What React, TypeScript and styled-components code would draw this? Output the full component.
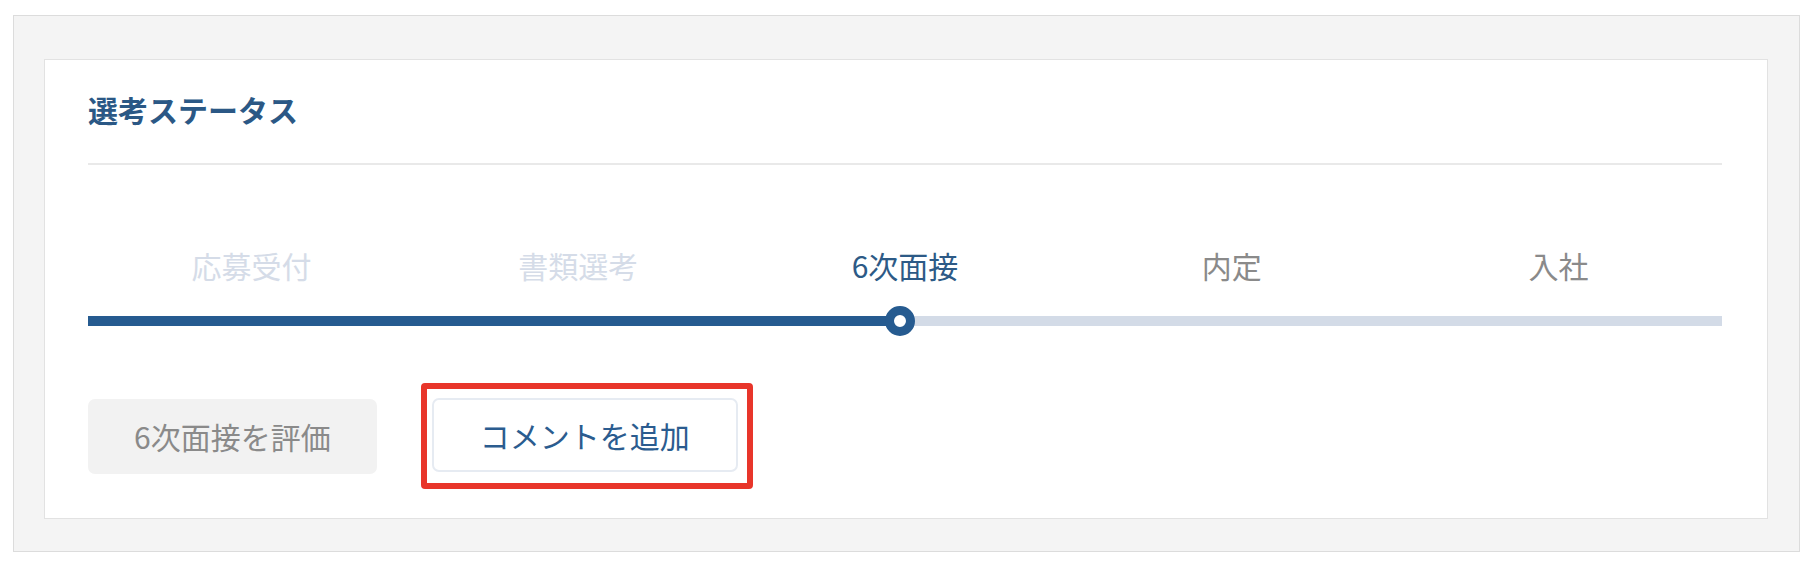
import React from 'react';
import styled, { createGlobalStyle } from 'styled-components';

const GlobalStyle = createGlobalStyle`
  html, body {
    margin: 0;
    padding: 0;
    background: #ffffff;
  }
  body {
    font-family: "Noto Sans CJK JP", "Noto Sans", sans-serif;
  }
`;

const steps = ['応募受付', '書類選考', '6次面接', '内定', '入社'];
const currentStep = 2;

type StepState = 'done' | 'current' | 'todo';

export default function App() {
  // 現在ステップの中心まで進捗バーを伸ばす
  const progress = 49.7;

  return (
    <>
      <GlobalStyle />
      <Page>
        <Frame>
          <Card>
            <Header>選考ステータス</Header>
            <StepLabels>
              {steps.map((step, i) => {
                const state: StepState = i < currentStep ? 'done' : i === currentStep ? 'current' : 'todo';
                return (
                  <StepLabel key={step} $state={state}>
                    {step}
                  </StepLabel>
                );
              })}
            </StepLabels>
            <TrackArea>
              <Track>
                <TrackFill style={{ width: `${progress}%` }} />
              </Track>
              <Knob style={{ left: `${progress}%` }} />
            </TrackArea>
            <Actions>
              <EvalButton>6次面接を評価</EvalButton>
              <Highlight>
                <CommentButton>コメントを追加</CommentButton>
              </Highlight>
            </Actions>
          </Card>
        </Frame>
      </Page>
    </>
  );
}

const Page = styled.div`
  padding: 15px 14px 16px 13px;
`;

const Frame = styled.div`
  background: #f4f4f4;
  border: 1px solid #dcdcdc;
  padding: 43px 31px 32px 30px;
`;

const Card = styled.div`
  background: #ffffff;
  border: 1px solid #e2e2e2;
  padding: 0 45px 29px 43px;
`;

const Header = styled.h2`
  margin: 0;
  padding: 29px 0 34px;
  font-size: 30px;
  line-height: 40px;
  font-weight: 700;
  color: #2b5885;
  border-bottom: 2px solid #e9e9e9;
`;

const StepLabels = styled.div`
  display: grid;
  grid-template-columns: repeat(5, 1fr);
  margin-top: 80px;
`;

const StepLabel = styled.div<{ $state: StepState }>`
  text-align: center;
  font-size: 30px;
  line-height: 40px;
  color: ${({ $state }) =>
    $state === 'done' ? '#d5dce8' : $state === 'current' ? '#2d5a86' : '#8a8a8a'};
`;

const TrackArea = styled.div`
  position: relative;
  height: 30px;
  margin-top: 21px;
  display: flex;
  align-items: center;
`;

const Track = styled.div`
  width: 100%;
  height: 10px;
  background: #d3dbe7;
`;

const TrackFill = styled.div`
  height: 100%;
  background: #265b90;
`;

const Knob = styled.div`
  position: absolute;
  top: 0;
  width: 30px;
  height: 30px;
  box-sizing: border-box;
  border-radius: 50%;
  border: 9px solid #265b90;
  background: #ffffff;
  transform: translateX(-50%);
`;

const Actions = styled.div`
  display: flex;
  align-items: center;
  margin-top: 47px;
`;

const BaseButton = styled.button`
  height: 75px;
  padding: 0 46px;
  border-radius: 7px;
  font-family: inherit;
  font-size: 30px;
  line-height: 40px;
  cursor: pointer;
`;

const EvalButton = styled(BaseButton)`
  background: #f2f2f2;
  border: none;
  color: #8a8a8a;
`;

const Highlight = styled.div`
  margin-left: 44px;
  padding: 9px 9px 11px 5px;
  border: 6px solid #e8352a;
  border-radius: 4px;
`;

const CommentButton = styled(BaseButton)`
  display: block;
  height: 74px;
  background: #ffffff;
  border: 2px solid #e6ebf2;
  color: #2b5c8f;
`;
